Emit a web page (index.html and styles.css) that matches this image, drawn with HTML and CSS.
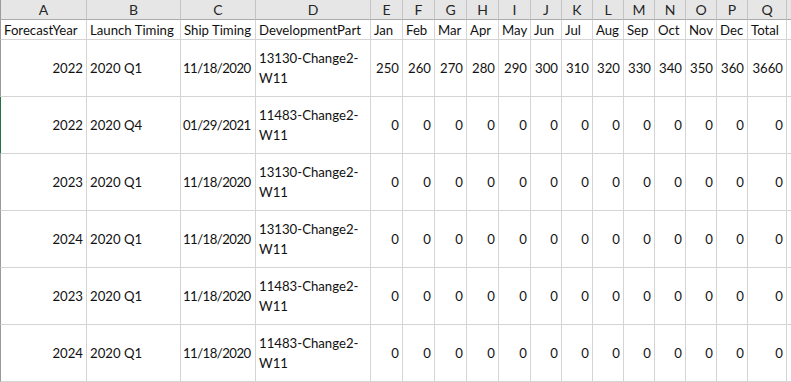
FILE: index.html
```html
<!DOCTYPE html>
<html>
<head>
<meta charset="utf-8">
<link rel="stylesheet" href="styles.css">
</head>
<body>
<div class="sheet">
  <div class="col-head">A</div><div class="col-head">B</div><div class="col-head">C</div><div class="col-head">D</div><div class="col-head">E</div><div class="col-head">F</div><div class="col-head">G</div><div class="col-head">H</div><div class="col-head">I</div><div class="col-head">J</div><div class="col-head">K</div><div class="col-head">L</div><div class="col-head">M</div><div class="col-head">N</div><div class="col-head">O</div><div class="col-head">P</div><div class="col-head">Q</div><div class="col-head rest"></div>

  <div class="cell label first">ForecastYear</div><div class="cell label">Launch Timing</div><div class="cell label">Ship Timing</div><div class="cell label">DevelopmentPart</div><div class="cell label">Jan</div><div class="cell label">Feb</div><div class="cell label">Mar</div><div class="cell label">Apr</div><div class="cell label">May</div><div class="cell label">Jun</div><div class="cell label">Jul</div><div class="cell label">Aug</div><div class="cell label">Sep</div><div class="cell label">Oct</div><div class="cell label">Nov</div><div class="cell label">Dec</div><div class="cell label">Total</div><div class="cell rest"></div>

  <div class="cell num first">2022</div><div class="cell txt">2020 Q1</div><div class="cell date">11/18/2020</div><div class="cell txt wrap">13130-Change2-<br>W11</div><div class="cell num">250</div><div class="cell num">260</div><div class="cell num">270</div><div class="cell num">280</div><div class="cell num">290</div><div class="cell num">300</div><div class="cell num">310</div><div class="cell num">320</div><div class="cell num">330</div><div class="cell num">340</div><div class="cell num">350</div><div class="cell num">360</div><div class="cell num">3660</div><div class="cell rest"></div>

  <div class="cell num first selected">2022</div><div class="cell txt">2020 Q4</div><div class="cell date">01/29/2021</div><div class="cell txt wrap">11483-Change2-<br>W11</div><div class="cell num">0</div><div class="cell num">0</div><div class="cell num">0</div><div class="cell num">0</div><div class="cell num">0</div><div class="cell num">0</div><div class="cell num">0</div><div class="cell num">0</div><div class="cell num">0</div><div class="cell num">0</div><div class="cell num">0</div><div class="cell num">0</div><div class="cell num">0</div><div class="cell rest"></div>

  <div class="cell num first">2023</div><div class="cell txt">2020 Q1</div><div class="cell date">11/18/2020</div><div class="cell txt wrap">13130-Change2-<br>W11</div><div class="cell num">0</div><div class="cell num">0</div><div class="cell num">0</div><div class="cell num">0</div><div class="cell num">0</div><div class="cell num">0</div><div class="cell num">0</div><div class="cell num">0</div><div class="cell num">0</div><div class="cell num">0</div><div class="cell num">0</div><div class="cell num">0</div><div class="cell num">0</div><div class="cell rest"></div>

  <div class="cell num first">2024</div><div class="cell txt">2020 Q1</div><div class="cell date">11/18/2020</div><div class="cell txt wrap">13130-Change2-<br>W11</div><div class="cell num">0</div><div class="cell num">0</div><div class="cell num">0</div><div class="cell num">0</div><div class="cell num">0</div><div class="cell num">0</div><div class="cell num">0</div><div class="cell num">0</div><div class="cell num">0</div><div class="cell num">0</div><div class="cell num">0</div><div class="cell num">0</div><div class="cell num">0</div><div class="cell rest"></div>

  <div class="cell num first">2023</div><div class="cell txt">2020 Q1</div><div class="cell date">11/18/2020</div><div class="cell txt wrap">11483-Change2-<br>W11</div><div class="cell num">0</div><div class="cell num">0</div><div class="cell num">0</div><div class="cell num">0</div><div class="cell num">0</div><div class="cell num">0</div><div class="cell num">0</div><div class="cell num">0</div><div class="cell num">0</div><div class="cell num">0</div><div class="cell num">0</div><div class="cell num">0</div><div class="cell num">0</div><div class="cell rest"></div>

  <div class="cell num first">2024</div><div class="cell txt">2020 Q1</div><div class="cell date">11/18/2020</div><div class="cell txt wrap">11483-Change2-<br>W11</div><div class="cell num">0</div><div class="cell num">0</div><div class="cell num">0</div><div class="cell num">0</div><div class="cell num">0</div><div class="cell num">0</div><div class="cell num">0</div><div class="cell num">0</div><div class="cell num">0</div><div class="cell num">0</div><div class="cell num">0</div><div class="cell num">0</div><div class="cell num">0</div><div class="cell rest"></div>
</div>
</body>
</html>
```

FILE: styles.css
```css
html, body {
  margin: 0;
  padding: 0;
  background: #ffffff;
}

.sheet {
  display: grid;
  grid-template-columns: 87px 94px 75px 115px 32px 32px 32px 32px 32px 31px 31px 31px 31px 31px 31px 31px 39px 4px;
  grid-template-rows: 20px 20px repeat(6, 57px);
  width: 791px;
  font-family: Lato, "Open Sans", sans-serif;
  font-size: 13.2px;
  color: #111111;
}

.col-head {
  box-sizing: border-box;
  background: #e6e6e6;
  border-right: 1px solid #c4c4c4;
  border-bottom: 1px solid #ababab;
  display: flex;
  align-items: center;
  justify-content: center;
  color: #262626;
  font-size: 14px;
}

.col-head:first-child {
  border-left: 1px solid #9b9b9b;
}

.col-head.rest {
  border-right: none;
}

.cell {
  box-sizing: border-box;
  border-right: 1px solid #d4d4d4;
  border-bottom: 1px solid #d4d4d4;
  display: flex;
  align-items: center;
  white-space: nowrap;
  overflow: hidden;
  padding: 0 3px;
}

.cell.first {
  border-left: 1px solid #9b9b9b;
}

.cell.first.selected {
  border-left: 1px solid #217346;
}

.cell.rest {
  border-right: none;
}

.label {
  justify-content: flex-start;
}

.txt {
  justify-content: flex-start;
}

.date {
  justify-content: flex-start;
  padding-left: 2px;
  letter-spacing: -0.55px;
}

.num {
  justify-content: flex-end;
}

.wrap {
  line-height: 20px;
}
```
